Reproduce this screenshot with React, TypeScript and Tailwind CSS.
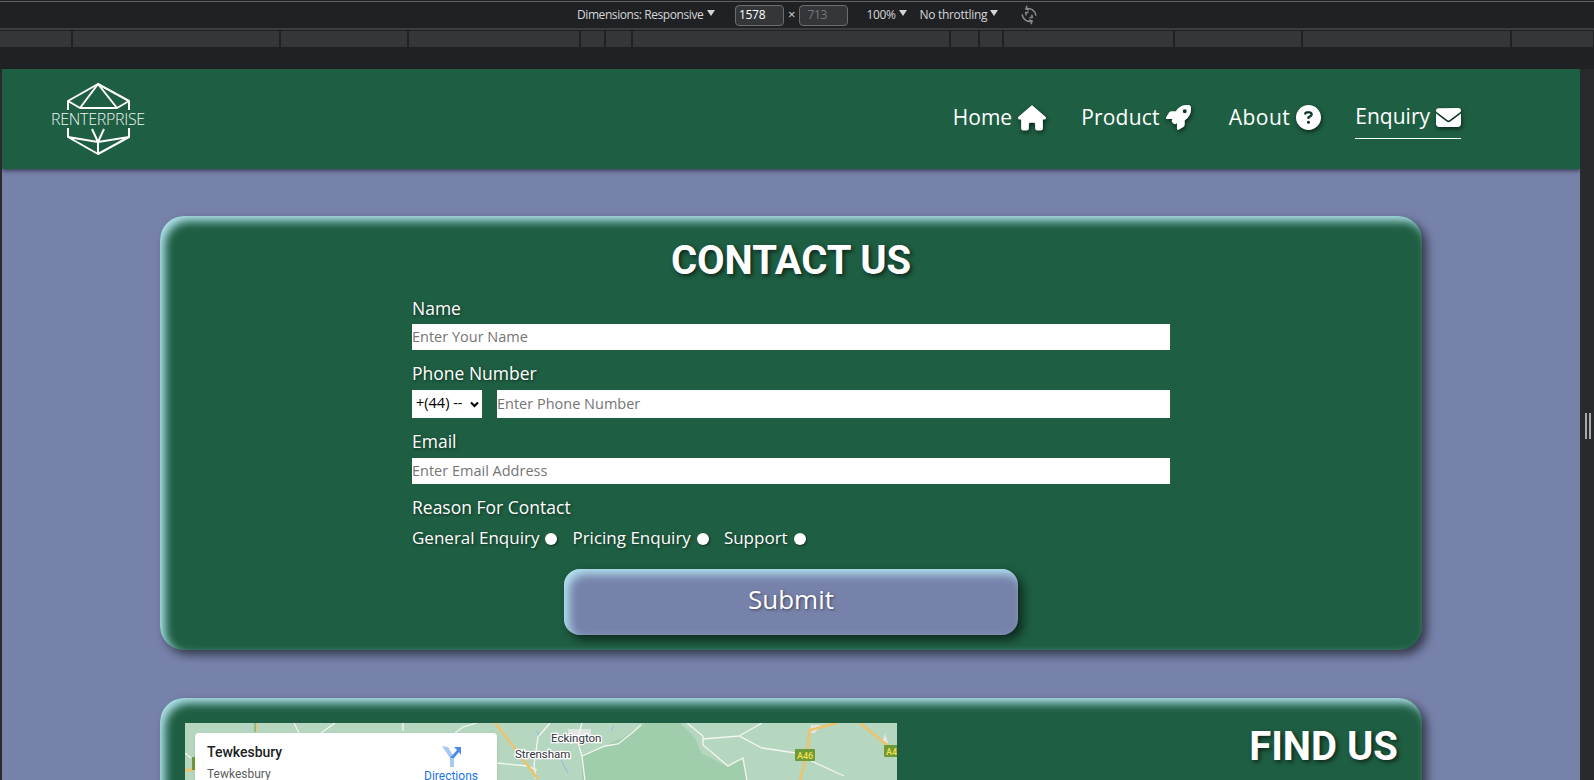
import { FaHouse, FaRocket, FaCircleQuestion, FaEnvelope } from 'react-icons/fa6'

const navItems = [
  { label: 'Home', icon: <FaHouse className="text-[28px] [filter:drop-shadow(1px_2px_2px_rgba(0,0,0,0.6))]" />, margin: '', tracking: '' },
  { label: 'Product', icon: <FaRocket className="text-[25px] [filter:drop-shadow(1px_2px_2px_rgba(0,0,0,0.6))]" />, margin: 'ml-[35px]', tracking: 'tracking-[0.2px]' },
  { label: 'About', icon: <FaCircleQuestion className="text-[25px] [filter:drop-shadow(1px_2px_2px_rgba(0,0,0,0.6))]" />, margin: 'ml-[38px]', tracking: 'tracking-[0.5px]' },
  { label: 'Enquiry', icon: <FaEnvelope className="text-[25px] [filter:drop-shadow(1px_2px_2px_rgba(0,0,0,0.6))]" />, margin: 'ml-[34px] border-b border-white', tracking: '' },
]

const rulerWidths = [73, 208, 128, 172, 25, 27, 318, 29, 24, 171, 128, 209, 83]

const Caret = () => (
  <svg width="8" height="6" viewBox="0 0 8 6" className="mb-1 ml-[3px]">
    <path d="M0 0h8L4 6z" fill="#d5d6d8" />
  </svg>
)

const DevToolbar = () => (
  <div className="shrink-0 bg-[#202124] font-['Open_Sans',sans-serif] text-[12px] text-[#d5d6d8]">
    <div className="mt-px h-px bg-[#5f6063]" />
    <div className="flex h-[26px] items-center pl-[577px] whitespace-nowrap">
      <span className="w-[127px] tracking-[-0.42px]">Dimensions: Responsive</span>
      <Caret />
      <div className="ml-[20px] flex h-[21px] w-[49px] items-center rounded-sm border border-[#6b6c6f] bg-[#35363a] pl-[3px] tracking-[-0.3px] text-white">1578</div>
      <span className="mx-[4px] text-[13px]">×</span>
      <div className="flex h-[21px] w-[49px] items-center rounded-sm border border-[#6b6c6f] bg-[#35363a] pl-[7px] tracking-[-0.3px] text-[#76777a]">713</div>
      <span className="ml-[18px] w-[30px] tracking-[-0.3px]">100%</span>
      <Caret />
      <span className="ml-[12px] w-[68px] tracking-[-0.3px]">No throttling</span>
      <Caret />
      <svg width="20" height="20" viewBox="0 0 20 20" fill="none" stroke="#8a8b8e" strokeWidth="1.5" className="ml-[21px]">
        <g transform="rotate(35 10 10)">
          <path d="M4 6.5A8 8 0 0 1 16 6.5M16 13.5A8 8 0 0 1 4 13.5" />
          <path d="M3 3.5 4 6.8l3.2-.8M17 16.5l-1-3.3-3.2.8" />
          <path d="M8 8 6 10l2 2M12 8l2 2-2 2" />
        </g>
      </svg>
    </div>
    <div className="h-[2px] bg-[#3c3d40]" />
    <div className="mt-px flex h-[16px] bg-[#35363a]">
      {rulerWidths.map((w, i) => (
        <div key={i} className="h-full shrink-0 border-r-2 border-[#202124]" style={{ width: w }} />
      ))}
    </div>
    <div className="h-[22px]" />
  </div>
)

const Logo = () => (
  <div className="relative h-[72px] w-[96px]">
    <svg width="96" height="72" viewBox="0 0 96 72" fill="none" stroke="white" strokeWidth="2" strokeLinejoin="round">
      <path d="M17 27V18L47 1 78 18V27" />
      <path d="M17 18l12 7h37l12-7M29 25 47 1l19 24" />
      <path d="M17 45v9l30 17 31-17v-9M17 54l30 5 31-5M47 71V59M41 46l6 13 6-13" />
    </svg>
    <span className="absolute top-[26px] right-[2px] left-0 text-center font-['Open_Sans',sans-serif] text-[16px] leading-[20px] font-light tracking-[-0.3px] whitespace-nowrap text-[#eef8f3]">
      RENTERPRISE
    </span>
  </div>
)

const Header = () => (
  <header className="relative z-10 flex h-[100px] shrink-0 items-center justify-between bg-[#1e5e42] pr-[119px] pl-[49px] shadow-[0_2px_4px_rgba(0,0,0,0.5)]">
    <Logo />
    <nav className="flex items-start pt-px">
      {navItems.map((item) => (
        <a
          key={item.label}
          className={`flex h-[38px] items-center gap-[6px] pb-[4px] text-[21px] text-white ${item.margin}`}
        >
          <span className={item.tracking}>{item.label}</span>
          {item.icon}
        </a>
      ))}
    </nav>
  </header>
)

const Label = ({ children }: { children: React.ReactNode }) => (
  <div className="text-[17.5px] leading-[24px] text-white [text-shadow:1px_1px_3px_rgba(0,0,0,0.5)]">{children}</div>
)

const fieldClass =
  "w-full bg-white pb-[2px] text-[14.5px] text-black outline-none placeholder:text-[#757575]"

const Radio = ({ label }: { label: string }) => (
  <label className="flex items-center gap-[6px] text-[17px] leading-[24px] text-white [text-shadow:1px_1px_3px_rgba(0,0,0,0.5)]">
    {label}
    <span className="mt-[2px] h-[12px] w-[12px] rounded-full bg-white shadow-[1px_1px_2px_rgba(0,0,0,0.5)]" />
  </label>
)

const ContactCard = () => (
  <section className="flex h-[434px] flex-col items-center rounded-[24px] bg-[#1e5e42] pt-[21px] shadow-[inset_5px_5px_10px_#b3e3ef,5px_5px_10px_rgba(0,0,0,0.55)]">
    <h1 className="font-['Roboto',sans-serif] text-[40px] leading-[47px] font-bold tracking-[-0.1px] text-white [text-shadow:2px_2px_4px_rgba(0,0,0,0.6)]">
      CONTACT US
    </h1>
    <form className="mt-[12px] flex w-[758px] flex-col">
      <Label>Name</Label>
      <input className={`${fieldClass} mt-[4px] h-[26px]`} placeholder="Enter Your Name" />
      <div className="mt-[11px]">
        <Label>Phone Number</Label>
      </div>
      <div className="mt-[5px] flex h-[28px] gap-[15px]">
        <div className="flex w-[70px] items-center bg-white pr-[3px] pb-[2px] pl-[4px] text-[14.5px] text-black">
          <span className="grow overflow-hidden whitespace-nowrap">+(44) --</span>
          <svg width="9" height="7" viewBox="0 0 9 7" fill="none" stroke="black" strokeWidth="2" className="mt-[2px] shrink-0"><path d="M1 1.5 4.5 5 8 1.5" /></svg>
        </div>
        <input className={`${fieldClass} h-full flex-1`} placeholder="Enter Phone Number" />
      </div>
      <div className="mt-[11px]">
        <Label>Email</Label>
      </div>
      <input className={`${fieldClass} mt-[5px] h-[26px]`} placeholder="Enter Email Address" />
      <div className="mt-[11px]">
        <Label>Reason For Contact</Label>
      </div>
      <div className="mt-[7px] flex gap-[15px]">
        <Radio label="General Enquiry" />
        <Radio label="Pricing Enquiry" />
        <Radio label="Support" />
      </div>
      <button
        type="button"
        className="mt-[19px] h-[66px] w-[454px] self-center rounded-[16px] bg-[#7782ab] pb-[5px] text-[26px] text-white shadow-[inset_5px_5px_10px_#b3e3ef,5px_5px_10px_rgba(0,0,0,0.55)] [text-shadow:1px_1px_3px_rgba(0,0,0,0.5)]"
      >
        Submit
      </button>
    </form>
  </section>
)

const MapPicture = () => (
  <svg viewBox="0 0 712 450" className="absolute inset-0 h-[450px] w-[712px] font-['Roboto',sans-serif]">
    <rect width="712" height="450" fill="#b5d6bf" />
    <path d="M397 34 430 18l6-2 20-13 4-3h35l15 15 6 15 27 14 14-8 5 22v392H397z" fill="#a0cdab" />
    <path d="M383 6h23v8h-23zM700 10l3 10h-6zM626 2h10l-6 8h-5z" fill="#dfe5e0" />
    <path d="M374 33l9 17M429 3l-3 5" fill="none" stroke="#8fb8ee" strokeWidth="1" />
    <path d="M352 8l3 6" fill="none" stroke="#8fb8ee" strokeWidth="1" />
    <g fill="none" stroke="#f3f6f1" strokeWidth="1.3">
      <path d="M456 2 447 10l-14 11-13 2-23 10" />
      <path d="M502 0l16 13v9l25 21 15-8 4 23" />
      <path d="M518 16l36-3 23 12 34 5 9 5 39 18M577 0l-23 13" />
      <path d="M397 0l-5 17 5 16 3 25" />
      <path d="M312 40l30 3 10 4M351 56l-2-14 4-28 12-14" />
      <path d="M109 0l5 10M150 0l-14 10M218 0v8M292 0l-14 4-8 6" />
      <path d="M0 30l6 5" />
    </g>
    <g fill="none" stroke="#f2c268" strokeWidth="2.4">
      <path d="M310 0l18 23 25 33" />
      <path d="M71 0v9M0 47h8" />
      <path d="M652 0l-27 7-3 20M620 38l-5 20" />
      <path d="M675 0l27 22 8 8" />
    </g>
    <path d="M70 0v9" fill="none" stroke="#5aa67a" strokeWidth="1" />
    <rect x="7" y="34" width="5" height="13" fill="#6e9a38" />
    <g fill="#30343a" fontSize="11.5" stroke="#fff" strokeWidth="2.5" paintOrder="stroke">
      <text x="366" y="19">Eckington</text>
      <text x="330" y="35">Strensham</text>
    </g>
    <rect x="610" y="26" width="20" height="12" rx="1" fill="#6e9a38" />
    <text x="612" y="35.5" fontSize="9" fontWeight="500" fill="#f6e04d">A46</text>
    <rect x="699" y="22" width="14" height="12" rx="1" fill="#6e9a38" />
    <text x="701" y="31.5" fontSize="9" fontWeight="500" fill="#f6e04d">A4</text>
  </svg>
)

const MapPanel = () => (
  <div className="relative h-[450px] w-[712px] shrink-0 overflow-hidden">
    <MapPicture />
    <div className="absolute top-[10px] left-[10px] flex h-[120px] w-[302px] justify-between rounded-sm bg-white pt-[10px] pr-[19px] pl-[12px] font-['Roboto',sans-serif] shadow-sm">
      <div>
        <div className="text-[14px] leading-[18px] font-medium text-[#202124]">Tewkesbury</div>
        <div className="mt-[5px] text-[12px] leading-[16px] text-[#5b5b5b]">Tewkesbury</div>
      </div>
      <div className="flex w-[54px] flex-col items-center pt-[1px]">
        <svg width="20" height="24" viewBox="0 0 20 24">
          <path d="M1 2 9 14v9h4V13L7 3z" fill="#a9c9f3" />
          <path d="M9 14 16 6l-3-3h7v8l-2-3-5 6z" fill="#4a8ae8" />
        </svg>
        <span className="mt-[1px] text-[12px] leading-[14px] text-[#1a73e8]">Directions</span>
      </div>
    </div>
  </div>
)

const FindCard = () => (
  <section className="mt-[48px] flex h-[500px] shrink-0 justify-between rounded-[24px] bg-[#1e5e42] pt-[25px] pr-[24px] pl-[25px] shadow-[inset_5px_5px_10px_#b3e3ef,5px_5px_10px_rgba(0,0,0,0.55)]">
    <MapPanel />
    <h2 className="font-['Roboto',sans-serif] text-[40px] leading-[47px] font-bold text-white [text-shadow:2px_2px_4px_rgba(0,0,0,0.6)]">
      FIND US
    </h2>
  </section>
)

export default function App() {
  return (
    <div className="flex h-[780px] w-[1594px] flex-col overflow-hidden bg-[#292a2d] font-['Open_Sans',sans-serif]">
      <DevToolbar />
      <div className="flex min-h-0 flex-1">
        <main className="ml-[2px] flex w-[1578px] flex-col overflow-hidden bg-[#7782ab]">
          <Header />
          <div className="flex flex-col px-[158px] pt-[47px]">
            <ContactCard />
            <FindCard />
          </div>
        </main>
        <div className="flex flex-1 items-start justify-center gap-[2px] pt-[344px] pl-[1px]">
          <div className="h-[26px] w-[2px] bg-[#a9aaac]" />
          <div className="h-[26px] w-[2px] bg-[#a9aaac]" />
        </div>
      </div>
    </div>
  )
}
